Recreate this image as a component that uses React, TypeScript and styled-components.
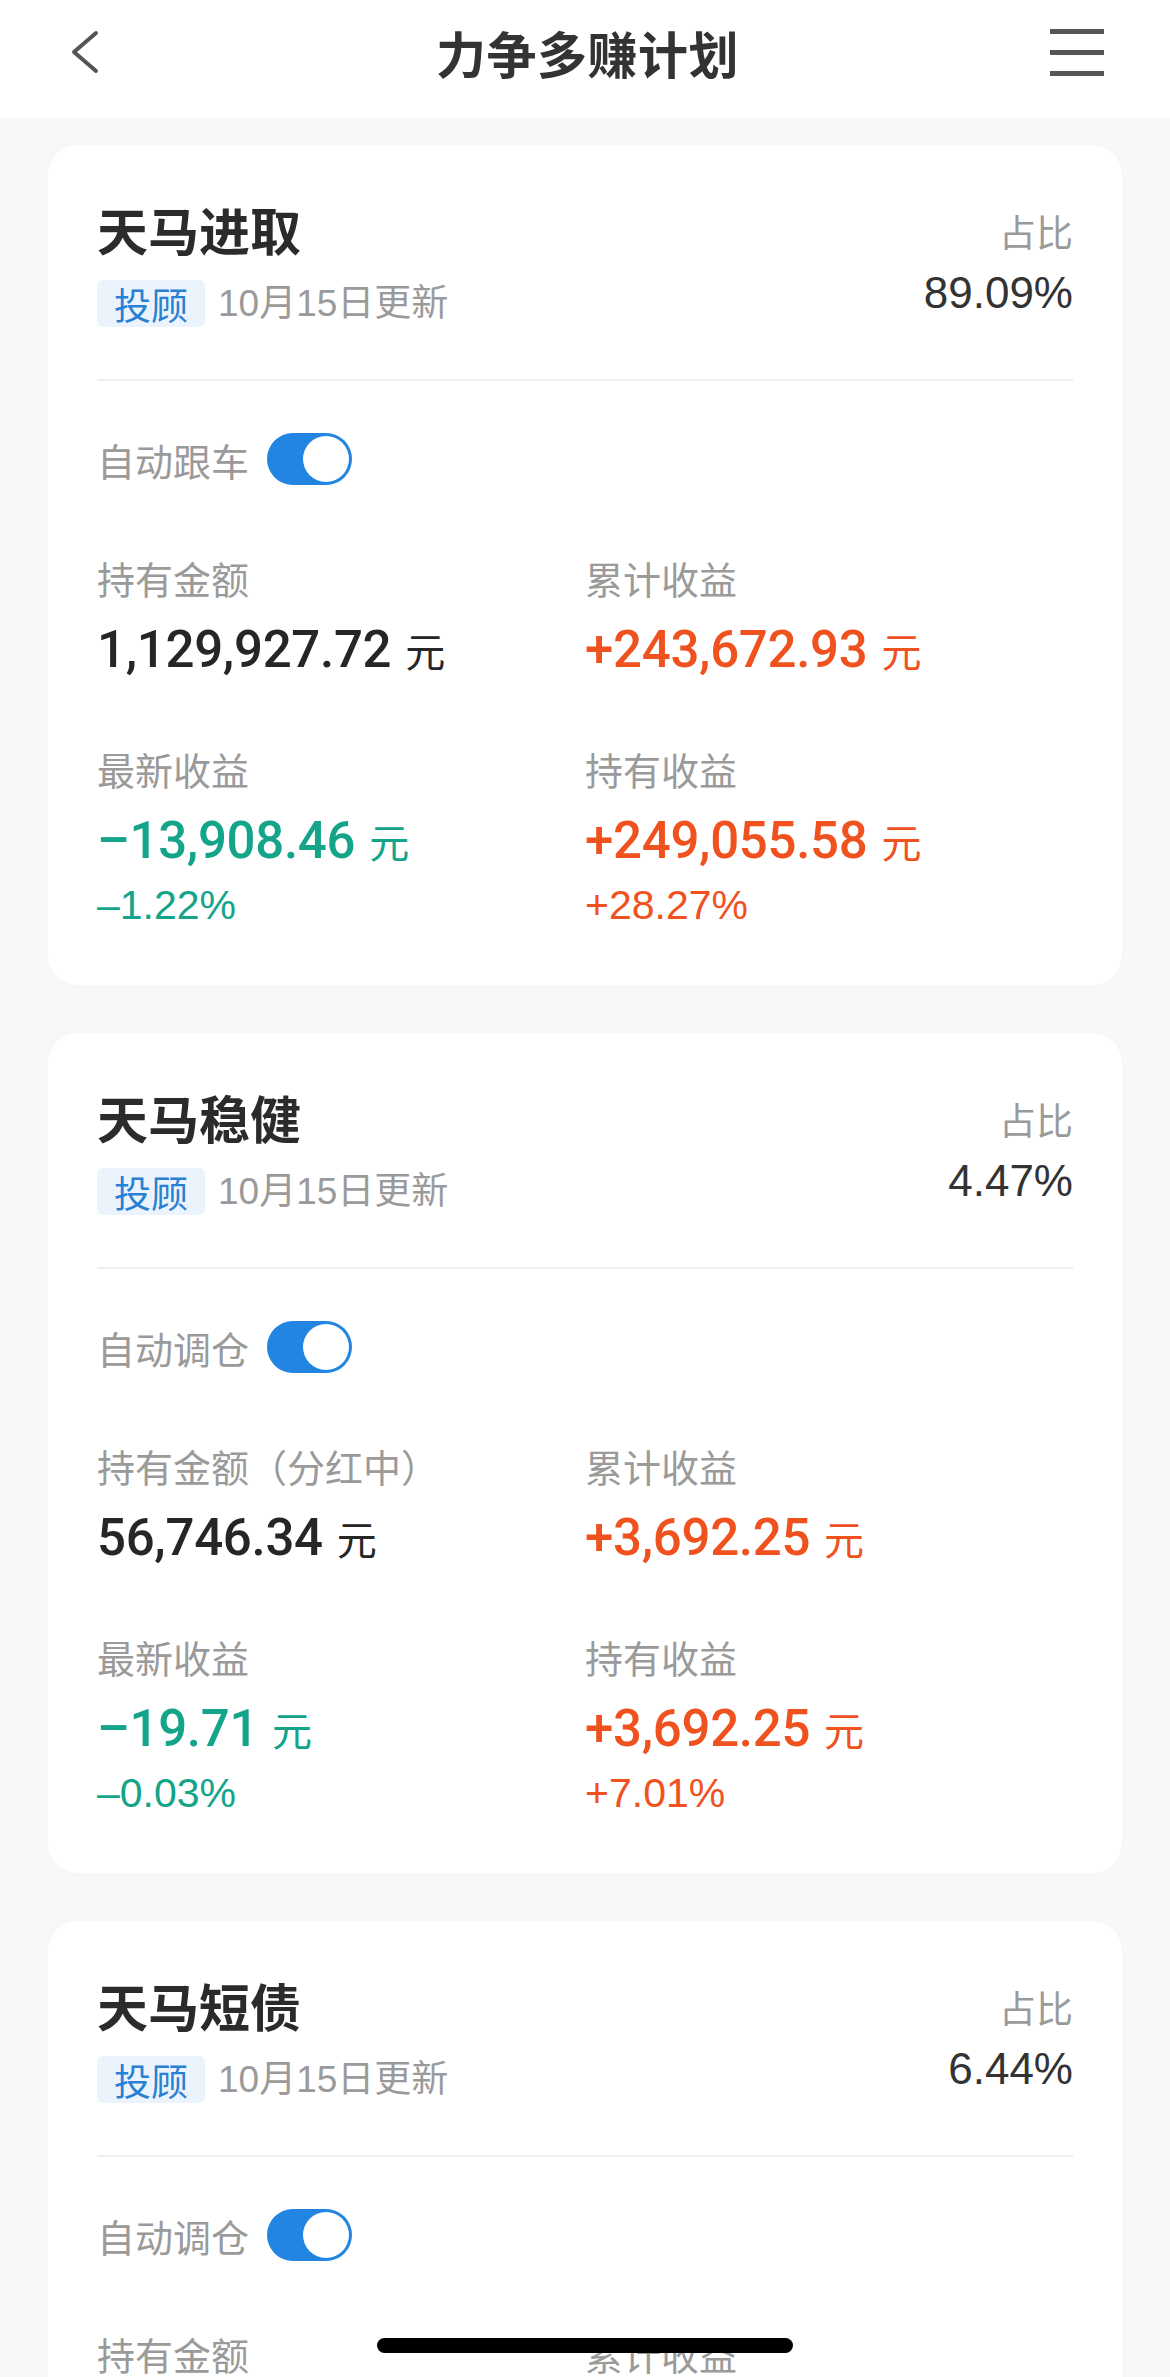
import React from "react";
import styled, { createGlobalStyle } from "styled-components";

const GlobalStyle = createGlobalStyle`
  html, body {
    margin: 0;
    padding: 0;
    background: #f7f8fa;
  }
  body {
    font-family: "Liberation Sans", "Noto Sans CJK SC", sans-serif;
    -webkit-font-smoothing: antialiased;
  }
  * { box-sizing: border-box; }
`;

const Page = styled.div`
  position: relative;
  width: 1170px;
  height: 2377px;
  overflow: hidden;
  background: #f7f8fa;
`;

const Header = styled.header`
  height: 118px;
  background: #ffffff;
  display: grid;
  grid-template-columns: 1fr auto 1fr;
  align-items: center;
  padding: 0 66px 14px 71px;
`;

const BackButton = styled.div`
  justify-self: start;
  display: flex;
  align-items: center;
  width: 30px;
  height: 44px;
`;

const MenuButton = styled.div`
  justify-self: end;
  display: flex;
  flex-direction: column;
  gap: 16px;
  width: 54px;
`;

const MenuLine = styled.span`
  display: block;
  height: 5px;
  background: #555555;
`;

const Title = styled.h1`
  margin: 0;
  font-family: "Noto Sans CJK SC", sans-serif;
  font-size: 50px;
  font-weight: 700;
  color: #333333;
  line-height: 60px;
  letter-spacing: 0.5px;
`;

const Content = styled.main`
  display: flex;
  flex-direction: column;
  gap: 48px;
  padding: 27px 48px 0;
`;

const Card = styled.section`
  flex-shrink: 0;
  height: 840px;
  background: #ffffff;
  border-radius: 30px;
  padding: 54px 49px 0;
  box-shadow: 0 0 10px rgba(0, 0, 0, 0.015);
`;

const CardTop = styled.div`
  display: flex;
  justify-content: space-between;
  align-items: flex-start;
`;

const NameBlock = styled.div`
  display: flex;
  flex-direction: column;
  gap: 21px;
`;

const Name = styled.h2`
  margin: 0;
  font-family: "Noto Sans CJK SC", sans-serif;
  font-size: 51px;
  line-height: 60px;
  font-weight: 600;
  color: #2b2b2b;
`;

const MetaRow = styled.div`
  display: flex;
  align-items: center;
  gap: 13px;
  height: 47px;
`;

const Tag = styled.span`
  display: inline-flex;
  align-items: center;
  justify-content: center;
  height: 47px;
  padding: 0 17px;
  border-radius: 6px;
  background: #ebf4fd;
  color: #2a80d4;
  font-family: "Noto Sans CJK SC", sans-serif;
  font-size: 37px;
`;

const MetaText = styled.span`
  font-size: 37px;
  color: #9a9a9a;
  line-height: 47px;
`;

const RatioBlock = styled.div`
  display: flex;
  flex-direction: column;
  align-items: flex-end;
`;

const RatioLabel = styled.span`
  font-family: "Noto Sans CJK SC", sans-serif;
  font-size: 37px;
  line-height: 64px;
  color: #9a9a9a;
`;

const RatioValue = styled.span`
  font-size: 44px;
  line-height: 60px;
  color: #333333;
`;

const Divider = styled.hr`
  margin: 52px 0 0;
  border: none;
  height: 2px;
  background: #efefef;
`;

const SwitchRow = styled.div`
  margin-top: 52px;
  display: flex;
  align-items: center;
  gap: 18px;
  height: 52px;
`;

const SwitchLabel = styled.span`
  font-family: "Noto Sans CJK SC", sans-serif;
  font-size: 38px;
  color: #9a9a9a;
`;

const Toggle = styled.span<{ $on: boolean }>`
  display: flex;
  justify-content: ${(p) => (p.$on ? "flex-end" : "flex-start")};
  align-items: center;
  width: 85px;
  height: 52px;
  padding: 3px;
  border-radius: 26px;
  background: ${(p) => (p.$on ? "#2185e1" : "#e5e5e5")};
`;

const Knob = styled.span`
  width: 46px;
  height: 46px;
  border-radius: 50%;
  background: #ffffff;
`;

const StatGrid = styled.div`
  margin-top: 68px;
  display: grid;
  grid-template-columns: 1fr 1fr;
  row-gap: 64px;
`;

const Stat = styled.div`
  display: flex;
  flex-direction: column;
`;

const StatLabel = styled.span`
  font-family: "Noto Sans CJK SC", sans-serif;
  font-size: 38px;
  line-height: 50px;
  color: #9a9a9a;
`;

type Tone = "dark" | "up" | "down";
const toneColor: Record<Tone, string> = {
  dark: "#262626",
  up: "#ef521f",
  down: "#14a489",
};

const StatValue = styled.div<{ $tone: Tone }>`
  margin-top: 17px;
  display: flex;
  align-items: baseline;
  gap: 14px;
  line-height: 60px;
  color: ${(p) => toneColor[p.$tone]};
`;

const Amount = styled.span`
  font-family: Roboto, "Liberation Sans", sans-serif;
  font-size: 51px;
  font-weight: 500;
  letter-spacing: -0.3px;
`;

const Unit = styled.span`
  font-family: "Noto Sans CJK SC", sans-serif;
  font-size: 40px;
`;

const Percent = styled.span<{ $tone: Tone }>`
  margin-top: 11px;
  font-size: 41px;
  line-height: 46px;
  color: ${(p) => toneColor[p.$tone]};
`;

const HomeIndicator = styled.div`
  position: absolute;
  left: 377px;
  bottom: 24px;
  width: 416px;
  height: 15px;
  border-radius: 8px;
  background: #000000;
`;

type StatData = {
  label: string;
  value?: string;
  tone?: Tone;
  pct?: string;
};

type Plan = {
  name: string;
  ratio: string;
  switchLabel: string;
  stats: StatData[];
};

const plans: Plan[] = [
  {
    name: "天马进取",
    ratio: "89.09%",
    switchLabel: "自动跟车",
    stats: [
      { label: "持有金额", value: "1,129,927.72", tone: "dark" },
      { label: "累计收益", value: "+243,672.93", tone: "up" },
      { label: "最新收益", value: "–13,908.46", tone: "down", pct: "–1.22%" },
      { label: "持有收益", value: "+249,055.58", tone: "up", pct: "+28.27%" },
    ],
  },
  {
    name: "天马稳健",
    ratio: "4.47%",
    switchLabel: "自动调仓",
    stats: [
      { label: "持有金额（分红中）", value: "56,746.34", tone: "dark" },
      { label: "累计收益", value: "+3,692.25", tone: "up" },
      { label: "最新收益", value: "–19.71", tone: "down", pct: "–0.03%" },
      { label: "持有收益", value: "+3,692.25", tone: "up", pct: "+7.01%" },
    ],
  },
  {
    name: "天马短债",
    ratio: "6.44%",
    switchLabel: "自动调仓",
    stats: [{ label: "持有金额" }, { label: "累计收益" }],
  },
];

function PlanCard({ plan }: { plan: Plan }) {
  return (
    <Card>
      <CardTop>
        <NameBlock>
          <Name>{plan.name}</Name>
          <MetaRow>
            <Tag>投顾</Tag>
            <MetaText>10月15日更新</MetaText>
          </MetaRow>
        </NameBlock>
        <RatioBlock>
          <RatioLabel>占比</RatioLabel>
          <RatioValue>{plan.ratio}</RatioValue>
        </RatioBlock>
      </CardTop>
      <Divider />
      <SwitchRow>
        <SwitchLabel>{plan.switchLabel}</SwitchLabel>
        <Toggle $on>
          <Knob />
        </Toggle>
      </SwitchRow>
      <StatGrid>
        {plan.stats.map((s, i) => (
          <Stat key={i}>
            <StatLabel>{s.label}</StatLabel>
            {s.value && (
              <StatValue $tone={s.tone ?? "dark"}>
                <Amount>{s.value}</Amount>
                <Unit>元</Unit>
              </StatValue>
            )}
            {s.pct && <Percent $tone={s.tone ?? "dark"}>{s.pct}</Percent>}
          </Stat>
        ))}
      </StatGrid>
    </Card>
  );
}

export default function App() {
  return (
    <>
      <GlobalStyle />
      <Page>
        <Header>
          <BackButton>
            <svg width="30" height="44" viewBox="0 0 30 44" fill="none">
              <polyline
                points="25,3 3,22 25,41"
                stroke="#555555"
                strokeWidth="4"
                strokeLinecap="round"
                strokeLinejoin="round"
              />
            </svg>
          </BackButton>
          <Title>力争多赚计划</Title>
          <MenuButton>
            <MenuLine />
            <MenuLine />
            <MenuLine />
          </MenuButton>
        </Header>
        <Content>
          {plans.map((p) => (
            <PlanCard key={p.name} plan={p} />
          ))}
        </Content>
        <HomeIndicator />
      </Page>
    </>
  );
}
